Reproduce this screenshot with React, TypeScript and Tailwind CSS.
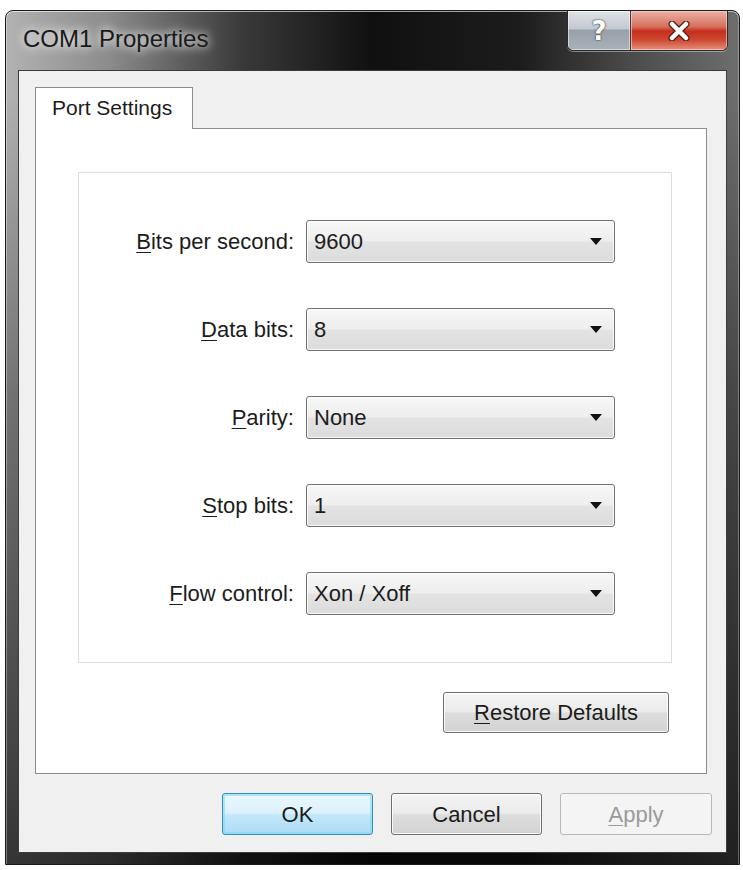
import React from "react";

const FONT = "font-['Liberation_Sans',Arial,sans-serif]";

type Row = { label: string; key: string; rest: string; value: string };

const rows: Row[] = [
  { label: "Bits per second:", key: "B", rest: "its per second:", value: "9600" },
  { label: "Data bits:", key: "D", rest: "ata bits:", value: "8" },
  { label: "Parity:", key: "P", rest: "arity:", value: "None" },
  { label: "Stop bits:", key: "S", rest: "top bits:", value: "1" },
  { label: "Flow control:", key: "F", rest: "low control:", value: "Xon / Xoff" },
];

function Combo({ value }: { value: string }) {
  return (
    <div className="ml-[12px] flex h-[43px] w-[309px] items-center justify-between rounded-[3px] border border-[#707070] bg-[linear-gradient(180deg,#f7f7f7_0%,#eeeeee_48%,#e3e3e3_52%,#dcdcdc_100%)] pl-[7px] pr-[12px] shadow-[inset_0_0_0_1px_rgba(255,255,255,0.8)]">
      <span className="text-[22px] leading-none text-[#1c1c1c]">{value}</span>
      <svg width="12" height="7" viewBox="0 0 12 7">
        <path d="M0 0 L12 0 L6 7 Z" fill="#111" />
      </svg>
    </div>
  );
}

export default function App() {
  return (
    <div className={`min-h-screen bg-white pl-[5px] pt-[10px] ${FONT}`}>
      {/* window frame */}
      <div className="flex h-[855px] w-[735px] flex-col rounded-t-[8px] border border-[#1a1a1a] bg-[linear-gradient(180deg,rgba(0,0,0,0)_0%,rgba(0,0,0,0)_10%,rgba(0,0,0,0.35)_45%,rgba(0,0,0,0.7)_100%),linear-gradient(90deg,#b2b2b2_0%,#8c8c8c_14%,#3a3a3a_32%,#101010_50%,#1c1c1c_70%,#4a4a4a_85%,#6e6e6e_100%)] shadow-[inset_0_1px_0_rgba(255,255,255,0.6),inset_1px_0_0_rgba(255,255,255,0.35),inset_-1px_0_0_rgba(255,255,255,0.3)]">
        {/* title bar */}
        <div className="flex h-[59px] items-start justify-between">
          <span className="pl-[17px] pt-[13px] text-[24px] leading-[30px] text-[#1a1a1a] [text-shadow:0_0_8px_rgba(255,255,255,0.9),0_0_14px_rgba(255,255,255,0.7)]">
            COM1 Properties
          </span>
          <div className="mr-[11px] flex h-[40px] overflow-hidden rounded-b-[6px] border border-t-0 border-[#2b2b2b] shadow-[0_1px_0_rgba(255,255,255,0.4)]">
            <div className="flex w-[63px] items-center justify-center border-r border-[#3a3a3a] bg-[linear-gradient(180deg,#dfe3e7_0%,#c3c9cf_45%,#98a1aa_50%,#a9b1b9_100%)] shadow-[inset_0_0_0_1px_rgba(255,255,255,0.5)]">
              <span className="font-['DejaVu_Sans',sans-serif] text-[26px] font-bold leading-none text-white [text-shadow:0_0_2px_#333,0_0_1px_#222]">
                ?
              </span>
            </div>
            <div className="flex w-[96px] items-center justify-center bg-[linear-gradient(180deg,#eab2a6_0%,#d7705c_40%,#c42f1c_52%,#cf4a33_75%,#e6917c_100%)] shadow-[inset_0_0_0_1px_rgba(255,220,210,0.6)]">
              <svg width="22" height="20" viewBox="0 0 22 20">
                <path d="M4 3 L18 17 M18 3 L4 17" stroke="#5a1a12" strokeWidth="7" strokeLinecap="round" />
                <path d="M4 3 L18 17 M18 3 L4 17" stroke="#ffffff" strokeWidth="4.5" strokeLinecap="round" />
              </svg>
            </div>
          </div>
        </div>

        {/* client area */}
        <div className="mx-[12px] mb-[11px] flex flex-1 flex-col border border-[#3c3c3c] bg-[#f0f0f0] pl-[16px] pr-[19px] pt-[16px]">
          {/* tab strip */}
          <div className="flex">
            <div className="relative z-10 -mb-px flex h-[42px] w-[158px] items-center border border-b-0 border-[#898c95] bg-white pb-[2px] pl-[16px] text-[21px] text-[#1c1c1c]">
              Port Settings
            </div>
          </div>

          {/* tab panel */}
          <div className="flex h-[646px] flex-col border border-[#898c95] bg-white pl-[42px] pr-[34px] pt-[43px]">
            <div className="flex h-[491px] flex-col gap-[45px] border border-[#dcdcdc] pt-[47px] shadow-[1px_1px_0_#ffffff]">
              {rows.map((r) => (
                <div key={r.label} className="flex h-[43px] items-center">
                  <span className="w-[215px] text-right text-[22px] text-[#1c1c1c]">
                    <u className="decoration-1 underline-offset-[3px]">{r.key}</u>
                    {r.rest}
                  </span>
                  <Combo value={r.value} />
                </div>
              ))}
            </div>

            <div className="mt-[29px] flex justify-end pr-[3px]">
              <button className="flex h-[41px] w-[226px] items-center justify-center rounded-[3px] border border-[#707070] bg-[linear-gradient(180deg,#f4f4f4_0%,#ebebeb_48%,#dddddd_52%,#d2d2d2_100%)] text-[22px] text-[#1c1c1c] shadow-[inset_0_0_0_1px_rgba(255,255,255,0.8)]">
                <u className="decoration-1 underline-offset-[3px]">R</u>estore Defaults
              </button>
            </div>
          </div>

          {/* dialog buttons */}
          <div className="mt-[19px] flex justify-end gap-[18px]">
            <button className="flex h-[42px] w-[151px] items-center justify-center rounded-[3px] border border-[#3c8cb4] bg-[linear-gradient(180deg,#ecf7fd_0%,#dcf1fc_48%,#c2e7fb_52%,#aedcf5_100%)] text-[22px] text-[#1c1c1c] shadow-[inset_0_0_0_2px_rgba(120,220,250,0.6)]">
              OK
            </button>
            <button className="flex h-[42px] w-[151px] items-center justify-center rounded-[3px] border border-[#707070] bg-[linear-gradient(180deg,#f4f4f4_0%,#ebebeb_48%,#dddddd_52%,#d2d2d2_100%)] text-[22px] text-[#1c1c1c] shadow-[inset_0_0_0_1px_rgba(255,255,255,0.8)]">
              Cancel
            </button>
            <button className="-mr-[5px] flex h-[42px] w-[152px] items-center justify-center rounded-[3px] border border-[#b5b9bc] bg-[#f4f4f4] text-[22px] text-[#9a9a9a]">
              <u className="decoration-1 underline-offset-[3px]">A</u>pply
            </button>
          </div>
        </div>
      </div>
    </div>
  );
}
